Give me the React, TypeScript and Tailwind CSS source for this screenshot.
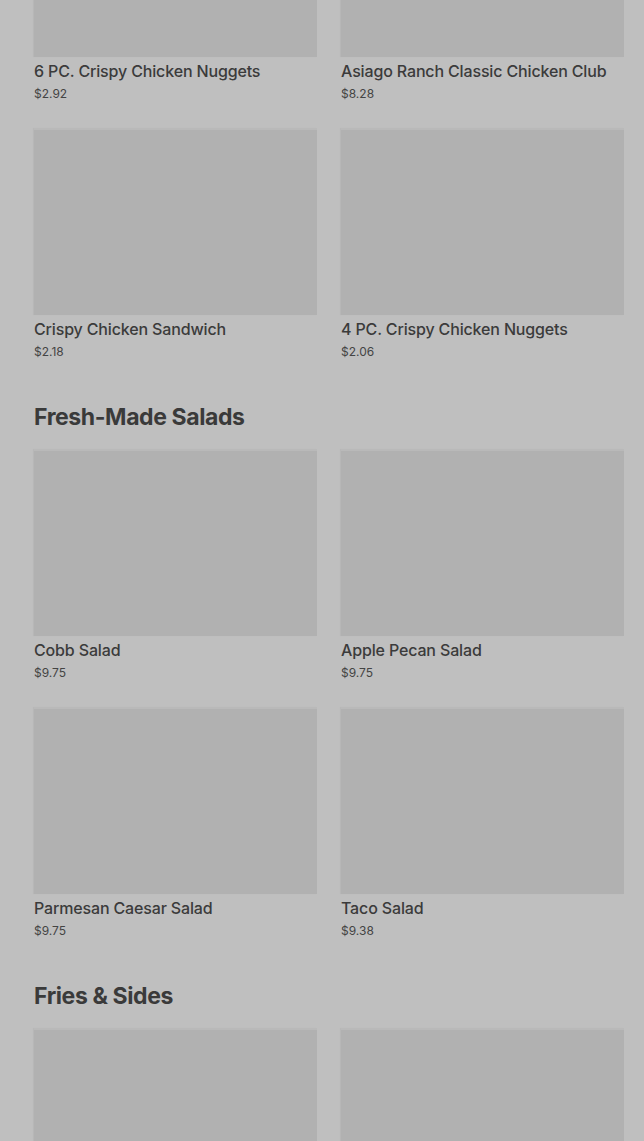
import React from "react";

interface MenuItem {
  name: string;
  price: string;
}

interface Section {
  title?: string;
  items: MenuItem[];
}

const sections: Section[] = [
  {
    items: [
      { name: "6 PC. Crispy Chicken Nuggets", price: "$2.92" },
      { name: "Asiago Ranch Classic Chicken Club", price: "$8.28" },
      { name: "Crispy Chicken Sandwich", price: "$2.18" },
      { name: "4 PC. Crispy Chicken Nuggets", price: "$2.06" },
    ],
  },
  {
    title: "Fresh-Made Salads",
    items: [
      { name: "Cobb Salad", price: "$9.75" },
      { name: "Apple Pecan Salad", price: "$9.75" },
      { name: "Parmesan Caesar Salad", price: "$9.75" },
      { name: "Taco Salad", price: "$9.38" },
    ],
  },
  {
    title: "Fries & Sides",
    items: [
      { name: "Natural-Cut Fries", price: "$2.29" },
      { name: "Chili", price: "$2.99" },
    ],
  },
];

function ItemCard({ item }: { item: MenuItem }) {
  return (
    <article className="flex flex-col">
      <div className="h-[187px] w-full border-t-[2px] border-[#b9b9b9] bg-[#b1b1b1] shadow-[-1px_0_1px_rgba(0,0,0,0.04)]" />
      <h3 className="pt-[4px] text-[16px] font-medium leading-5 tracking-[-0.15px] text-[#3b3b3b]">
        {item.name}
      </h3>
      <p className="mt-[5px] text-[12px] leading-4 text-[#444444]">
        {item.price}
      </p>
    </article>
  );
}

export default function App() {
  return (
    <div
      className="overflow-hidden bg-[#bfbfbf]"
      style={{ fontFamily: "Inter, 'Liberation Sans', sans-serif" }}
    >
      <div className="-mt-[130px] pb-[40px] pl-[34px] pr-[20px]">
        {sections.map((section, i) => (
          <section key={i} className={i === 0 ? "" : "mt-[40px]"}>
            {section.title && (
              <h2 className="mb-[15px] text-[23px] font-bold leading-[34px] tracking-[-0.4px] text-[#3a3a3a]">
                {section.title}
              </h2>
            )}
            <div className="grid grid-cols-2 gap-x-[24px] gap-y-[26px]">
              {section.items.map((item) => (
                <ItemCard key={item.name} item={item} />
              ))}
            </div>
          </section>
        ))}
      </div>
    </div>
  );
}
